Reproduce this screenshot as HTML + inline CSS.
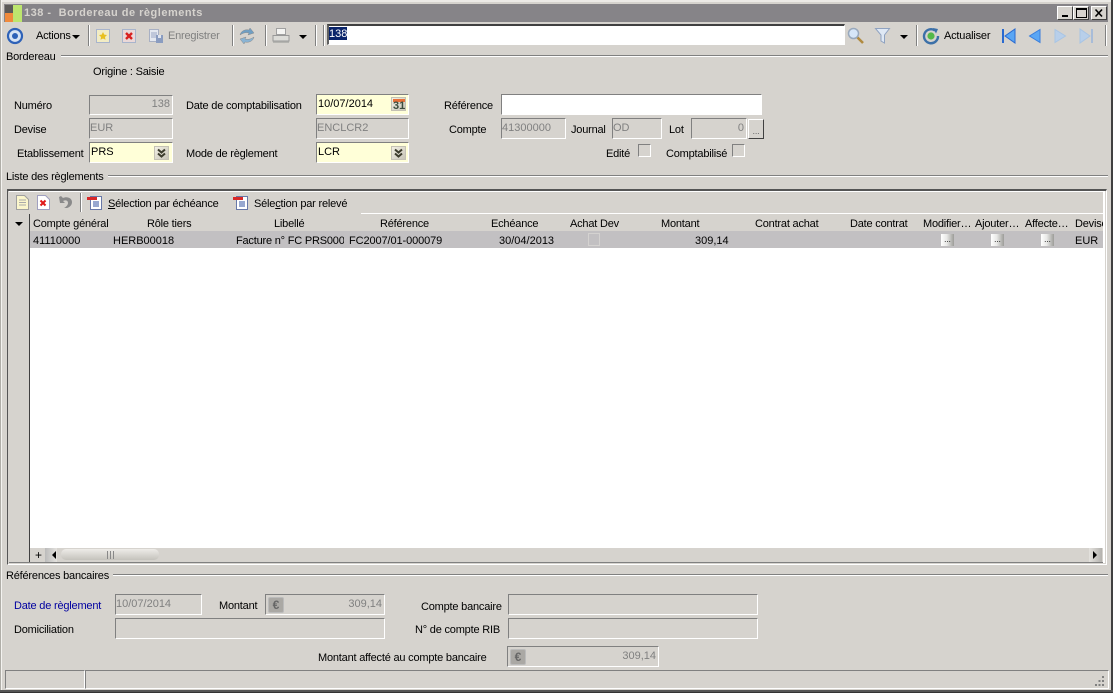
<!DOCTYPE html>
<html lang="fr"><head><meta charset="utf-8"><title>Bordereau de règlements</title>
<style>
html,body{margin:0;padding:0;width:1113px;height:693px;overflow:hidden;background:#d6d3ce}
body{position:relative;font-family:"Liberation Sans",sans-serif;font-size:11px;letter-spacing:-.2px;color:#000}
.b{position:absolute;box-sizing:border-box}
.t{position:absolute;white-space:nowrap;line-height:14px;height:14px;margin-top:1px}
.n{letter-spacing:0}
.g{color:#808080}
.f{position:absolute;box-sizing:border-box;border:1px solid;border-color:#808080 #fff #fff #808080;background:#d6d3ce}
.y{background:#ffffd8}
.w{background:#fff}
.sep{position:absolute;width:1px;background:#808080;border-right:1px solid #fff}
.gr{position:absolute;height:1px;background:#808080;border-bottom:1px solid #fff}
svg{position:absolute;overflow:visible}
.dd{position:absolute;width:15px;height:14px;background:linear-gradient(135deg,#f2f0e4,#c8c5b8);border:1px solid #c4c1b4;box-sizing:border-box}
.gb{position:absolute;width:13px;height:12px;background:linear-gradient(90deg,#fff,#e8e8e6 45%,#9c9c98);font-size:8px;line-height:12px;text-align:center;letter-spacing:0}
.wb{position:absolute;top:6px;width:16px;height:14px;box-sizing:border-box;background:#d6d3ce;border:1px solid;border-color:#fff #404040 #404040 #fff}
.eu{position:absolute;width:16px;height:16px;background:#aaa8a4;border:1px solid #bbb;box-sizing:border-box;border-radius:2px;color:#666;font-weight:bold;font-size:12px;line-height:14px;text-align:center;letter-spacing:0}
</style></head><body>
<!-- window frame -->
<div class="b" style="left:0;top:0;width:1113px;height:2px;background:#eceae6"></div>
<div class="b" style="left:0;top:0;width:1px;height:693px;background:#b0aea8"></div>
<div class="b" style="left:1px;top:0;width:1px;height:693px;background:#f4f3f0"></div>
<div class="b" style="left:1111px;top:0;width:2px;height:693px;background:#404040"></div>
<div class="b" style="left:0;top:690px;width:1113px;height:3px;background:#555"></div>
<div class="b" style="left:0;top:692px;width:1113px;height:1px;background:#333"></div>
<!-- title bar -->
<div class="b" style="left:4px;top:4px;width:1104px;height:18px;background:#868488"></div>
<div class="b" style="left:5px;top:5px;width:8px;height:8px;background:#5c5a58"></div>
<div class="b" style="left:5px;top:13px;width:8px;height:9px;background:#f08a3c"></div>
<div class="b" style="left:13px;top:5px;width:9px;height:17px;background:#bde66e"></div>
<div class="t" style="left:24px;top:5px;font-weight:bold;color:#d6d3ce;font-size:11px;letter-spacing:.5px">138 -&nbsp; Bordereau de règlements</div>
<div class="wb" style="left:1057px"><div class="b" style="left:4px;top:8px;width:6px;height:2px;background:#000"></div></div>
<div class="wb" style="left:1073px"><div class="b" style="left:2px;top:1px;width:11px;height:10px;border:1px solid #000;border-top-width:2px"></div></div>
<div class="wb" style="left:1091px"><svg width="14" height="12" style="left:0;top:0"><path d="M3.500 2.500l6.500 7M10 2.500l-6.500 7" stroke="#000" stroke-width="1.600" fill="none"/></svg></div>

<!-- main toolbar -->
<svg width="18" height="18" style="left:6px;top:27px"><circle cx="9" cy="9" r="7" fill="#d8e4f4" stroke="#2e62b8" stroke-width="2.200"/><circle cx="9" cy="9" r="3" fill="#2e62b8"/></svg>
<div class="t" style="left:36px;top:28px">Actions</div>
<svg width="8" height="4" style="left:72px;top:35px"><path d="M0 0h8L4 4z"/></svg>
<div class="sep" style="left:88px;top:25px;height:21px"></div>
<svg width="16" height="16" style="left:95px;top:28px"><path d="M1.500 1.500h13v13h-13z" fill="#f2ecc4" stroke="#a8b4cc"/><path d="M8 4l1.300 2.600 2.700.4-2 2 .5 2.800L8 10.500 5.500 11.800 6 9 4 7l2.700-.4z" fill="#e8c020"/></svg>
<svg width="16" height="16" style="left:121px;top:28px"><path d="M1.500 1.500h13v13h-13z" fill="#ead8d8" stroke="#a8b4cc"/><path d="M5 5l6 6M11 5l-6 6" stroke="#d82020" stroke-width="2.400"/></svg>
<svg width="17" height="16" style="left:148px;top:28px"><path d="M1.500 1.500h9v12h-9z" fill="#e4e8f0" stroke="#a8b0c4"/><path d="M3 5h6M3 7h6M3 9h6" stroke="#9aa6c4"/><path d="M8 7h7v8H8z" fill="#8a9cc0"/><path d="M10 7h3v3h-3z" fill="#dfe4ee"/></svg>
<div class="t g" style="left:168px;top:28px">Enregistrer</div>
<div class="sep" style="left:232px;top:25px;height:21px"></div>
<svg width="18" height="18" style="left:238px;top:27px"><path d="M2 8c1-4 5-6 9-5l1-2 4 5-6 2 1-2c-3-1-6 0-9 2z" fill="#6f9fc4" stroke="#8a8a8a" stroke-width=".5"/><path d="M16 10c-1 4-5 6-9 5l-1 2-4-5 6-2-1 2c3 1 6 0 9-2z" fill="#8ab4d4" stroke="#8a8a8a" stroke-width=".5"/></svg>
<div class="sep" style="left:265px;top:25px;height:21px"></div>
<svg width="18" height="18" style="left:272px;top:27px"><path d="M4.500 1.500h9v6h-9z" fill="#f4f4f2" stroke="#a0a0a0"/><path d="M1 8.500h16v5.500H1z" fill="#dcdcd8" stroke="#989898"/><path d="M1 14.500h16v1.500H1z" fill="#b4b4b0"/></svg>
<svg width="8" height="4" style="left:299px;top:35px"><path d="M0 0h8L4 4z"/></svg>
<div class="sep" style="left:315px;top:25px;height:21px"></div>
<div class="sep" style="left:323px;top:25px;height:21px"></div>
<div class="f w" style="left:327px;top:24px;width:518px;height:21px;border-top:2px solid #404040;border-left:2px solid #606060"></div>
<div class="b" style="left:329px;top:27px;width:18px;height:13px;background:#0a246a"></div>
<div class="t n" style="left:329px;top:26px;color:#fff">138</div>
<svg width="18" height="18" style="left:847px;top:27px"><path d="M10 10l6 6" stroke="#b08a40" stroke-width="2.600"/><circle cx="6.500" cy="6.500" r="5" fill="#d6e6f8" stroke="#98a8bc" stroke-width="1.500"/></svg>
<svg width="16" height="18" style="left:875px;top:27px"><path d="M.5 1.500h14L9.500 8v8L6 14V8z" fill="#dfe8f4" stroke="#8fa2c0"/></svg>
<svg width="8" height="4" style="left:900px;top:35px"><path d="M0 0h8L4 4z"/></svg>
<div class="sep" style="left:916px;top:25px;height:21px"></div>
<svg width="18" height="18" style="left:922px;top:27px"><path d="M13 3.500A7 7 0 1 0 16 9" fill="none" stroke="#3c70a8" stroke-width="2.400"/><path d="M11 1l5 1-2 4.500z" fill="#3c70a8"/><circle cx="9" cy="9" r="3.600" fill="#54b848"/></svg>
<div class="t" style="left:944px;top:28px">Actualiser</div>
<svg width="15" height="16" style="left:1001px;top:28px"><path d="M1 1h2v14H1z" fill="#2a6ad0"/><path d="M14 1v14L4 8z" fill="#5aa6f4" stroke="#2a6ad0"/></svg>
<svg width="13" height="16" style="left:1028px;top:28px"><path d="M12 1.500v13L1.500 8z" fill="#5aa6f4" stroke="#3a7edc"/></svg>
<svg width="13" height="16" style="left:1054px;top:28px"><path d="M1 1.500v13L11.500 8z" fill="#b8cfea" stroke="#a8c4e4"/></svg>
<svg width="15" height="16" style="left:1079px;top:28px"><path d="M12 1h2v14h-2z" fill="#a8bcd8"/><path d="M1 1v14L11 8z" fill="#b8cfea" stroke="#a8c4e4"/></svg>
<div class="sep" style="left:1105px;top:25px;height:21px"></div>

<!-- Bordereau -->
<div class="gr" style="left:61px;top:55px;width:1047px"></div>
<div class="t" style="left:6px;top:49px">Bordereau</div>
<div class="t" style="left:93px;top:64px">Origine : Saisie</div>
<div class="t" style="left:14px;top:98px">Numéro</div>
<div class="f" style="left:89px;top:95px;width:84px;height:20px"></div>
<div class="t g n" style="left:100px;width:70px;text-align:right;top:96px">138</div>
<div class="t" style="left:14px;top:122px">Devise</div>
<div class="f" style="left:89px;top:118px;width:84px;height:21px"></div>
<div class="t g n" style="left:90px;top:120px">EUR</div>
<div class="t" style="left:17px;top:146px">Etablissement</div>
<div class="f y" style="left:89px;top:142px;width:84px;height:21px"></div>
<div class="t n" style="left:91px;top:144px">PRS</div>
<div class="dd" style="left:154px;top:146px"><svg width="13" height="12" style="left:0;top:0"><path d="M3 2.500l3.500 3 3.500-3M3 6.500l3.500 3 3.500-3" fill="none" stroke="#3c3c2c" stroke-width="2"/></svg></div>
<div class="t" style="left:186px;top:98px">Date de comptabilisation</div>
<div class="f y" style="left:316px;top:94px;width:93px;height:21px"></div>
<div class="t n" style="left:318px;top:96px">10/07/2014</div>
<div class="dd" style="left:391px;top:97px"><div class="b" style="left:1px;top:1px;width:12px;height:3px;background:#e87038"></div><div class="t n" style="left:1px;top:0;font-weight:bold;font-size:11px;color:#3c4c3c">31</div></div>
<div class="f" style="left:316px;top:118px;width:93px;height:21px"></div>
<div class="t g n" style="left:317px;top:120px">ENCLCR2</div>
<div class="t" style="left:186px;top:146px">Mode de règlement</div>
<div class="f y" style="left:316px;top:142px;width:93px;height:21px"></div>
<div class="t n" style="left:318px;top:144px">LCR</div>
<div class="dd" style="left:391px;top:146px"><svg width="13" height="12" style="left:0;top:0"><path d="M3 2.500l3.500 3 3.500-3M3 6.500l3.500 3 3.500-3" fill="none" stroke="#3c3c2c" stroke-width="2"/></svg></div>
<div class="t" style="left:444px;top:98px">Référence</div>
<div class="f w" style="left:501px;top:94px;width:261px;height:21px"></div>
<div class="t" style="left:449px;top:122px">Compte</div>
<div class="f" style="left:501px;top:118px;width:65px;height:21px"></div>
<div class="t g n" style="left:502px;top:120px">41300000</div>
<div class="t" style="left:571px;top:122px">Journal</div>
<div class="f" style="left:612px;top:118px;width:50px;height:21px"></div>
<div class="t g n" style="left:613px;top:120px">OD</div>
<div class="t" style="left:669px;top:122px">Lot</div>
<div class="f" style="left:691px;top:118px;width:56px;height:21px"></div>
<div class="t g n" style="left:700px;width:44px;text-align:right;top:120px">0</div>
<div class="b" style="left:748px;top:119px;width:16px;height:20px;border:1px solid;border-color:#fff #404040 #404040 #fff;background:#d6d3ce;font-size:9px;text-align:center;line-height:22px;color:#666">...</div>
<div class="t" style="left:606px;top:146px">Edité</div>
<div class="f" style="left:638px;top:144px;width:13px;height:13px"></div>
<div class="t" style="left:666px;top:146px">Comptabilisé</div>
<div class="f" style="left:732px;top:144px;width:13px;height:13px"></div>

<!-- Liste -->
<div class="gr" style="left:108px;top:175px;width:1000px"></div>
<div class="t" style="left:6px;top:169px">Liste des règlements</div>
<div class="b" style="left:7px;top:189px;width:1100px;height:376px;border:1px solid;border-color:#555 #fff #fff #555;border-top-width:2px"></div>
<div class="b" style="left:9px;top:191px;width:1096px;height:372px;background:#fff"></div>
<div class="b" style="left:9px;top:192px;width:1094px;height:21px;background:#d6d3ce"></div>
<div class="b" style="left:361px;top:213px;width:742px;height:1px;background:#fff"></div>
<div class="b" style="left:9px;top:213px;width:352px;height:1px;background:#d6d3ce"></div>
<svg width="13" height="15" style="left:16px;top:195px"><path d="M.5.500h8l4 4v10H.500z" fill="#fbf6cc" stroke="#a0a0a0"/><path d="M3 5h7M3 7.500h7M3 10h7" stroke="#aaa"/></svg>
<svg width="13" height="15" style="left:37px;top:195px"><path d="M.5.500h8l4 4v10H.500z" fill="#fff" stroke="#a0a0c0"/><path d="M3.500 5.500l5 5M8.500 5.500l-5 5" stroke="#e01818" stroke-width="2"/></svg>
<svg width="15" height="15" style="left:58px;top:195px"><path d="M1 2l1 6h5L5 6c2-1 5-1 5 2 0 2-2 4-4 5h3c3-1 5-3 5-6 0-4-5-6-9-4L3 1z" fill="#8a8a8a"/></svg>
<div class="sep" style="left:80px;top:193px;height:19px"></div>
<svg width="16" height="15" style="left:87px;top:195px"><path d="M3.500 1.500h11v13h-11z" fill="#fff" stroke="#6878a8"/><path d="M6 7h6M6 9h6M6 11h6" stroke="#3050a0"/><path d="M0 2h10v3H0z" fill="#d82828"/></svg>
<div class="t" style="left:108px;top:196px"><u>S</u>élection par échéance</div>
<svg width="16" height="15" style="left:233px;top:195px"><path d="M3.500 1.500h11v13h-11z" fill="#fff" stroke="#6878a8"/><path d="M6 7h6M6 9h6M6 11h6" stroke="#3050a0"/><path d="M0 2h10v3H0z" fill="#d82828"/></svg>
<div class="t" style="left:254px;top:196px">Séle<u>c</u>tion par relevé</div>
<!-- grid -->
<div class="b" style="left:9px;top:214px;width:1094px;height:17px;background:#d6d3ce"></div>
<div class="b" style="left:30px;top:231px;width:1073px;height:17px;background:#c2c0c2"></div>
<div class="b" style="left:9px;top:214px;width:20px;height:348px;background:#d6d3ce"></div>
<div class="b" style="left:29px;top:214px;width:1px;height:348px;background:#404040"></div>
<svg width="8" height="4" style="left:15px;top:222px"><path d="M0 0h8L4 4z"/></svg>
<div class="t" style="left:33px;top:216px">Compte général</div>
<div class="t" style="left:147px;top:216px">Rôle tiers</div>
<div class="t" style="left:274px;top:216px">Libellé</div>
<div class="t" style="left:380px;top:216px">Référence</div>
<div class="t" style="left:491px;top:216px">Echéance</div>
<div class="t" style="left:570px;top:216px">Achat Dev</div>
<div class="t" style="left:661px;top:216px">Montant</div>
<div class="t" style="left:755px;top:216px">Contrat achat</div>
<div class="t" style="left:850px;top:216px">Date contrat</div>
<div class="t" style="left:923px;top:216px">Modifier…</div>
<div class="t" style="left:975px;top:216px">Ajouter…</div>
<div class="t" style="left:1025px;top:216px">Affecte…</div>
<div class="t" style="left:1075px;top:216px;width:28px;overflow:hidden">Devise</div>
<div class="t n" style="left:33px;top:233px">41110000</div>
<div class="t n" style="left:113px;top:233px">HERB00018</div>
<div class="t" style="left:236px;top:233px;width:108px;overflow:hidden">Facture n° FC PRS00001</div>
<div class="t n" style="left:349px;top:233px;letter-spacing:-.1px">FC2007/01-000079</div>
<div class="t n" style="left:499px;top:233px">30/04/2013</div>
<div class="b" style="left:588px;top:233px;width:12px;height:13px;border:1px solid #d4d2d0"></div>
<div class="t n" style="left:695px;top:233px">309,14</div>
<div class="gb" style="left:941px;top:234px">...</div>
<div class="gb" style="left:991px;top:234px">...</div>
<div class="gb" style="left:1041px;top:234px">...</div>
<div class="t n" style="left:1075px;top:233px">EUR</div>
<!-- scrollbar -->
<div class="b" style="left:30px;top:548px;width:1073px;height:14px;background:#d6d3ce"></div>
<div class="b" style="left:9px;top:562px;width:1094px;height:1px;background:#808080"></div>
<div class="t" style="left:35px;top:547px;font-size:12px">+</div>
<div class="b" style="left:45px;top:548px;width:12px;height:14px;background:linear-gradient(90deg,#bbb,#e4e2de)"></div>
<svg width="4" height="8" style="left:52px;top:551px"><path d="M4 0v8L0 4z"/></svg>
<div class="b" style="left:61px;top:549px;width:98px;height:11px;border-radius:5px;background:linear-gradient(180deg,#eeece8,#c4c2bc)"></div>
<svg width="8" height="8" style="left:107px;top:551px"><path d="M.5 0v8M3.500 0v8M6.500 0v8" stroke="#888"/></svg>
<div class="b" style="left:1089px;top:548px;width:13px;height:14px;background:linear-gradient(90deg,#e4e2de,#b4b2ae)"></div>
<svg width="4" height="8" style="left:1093px;top:551px"><path d="M0 0v8L4 4z"/></svg>

<!-- References -->
<div class="gr" style="left:113px;top:574px;width:995px"></div>
<div class="t" style="left:6px;top:568px">Références bancaires</div>
<div class="t" style="left:14px;top:598px;color:#0000a0">Date de règlement</div>
<div class="f" style="left:115px;top:594px;width:87px;height:21px"></div>
<div class="t g n" style="left:116px;top:596px">10/07/2014</div>
<div class="t" style="left:219px;top:598px">Montant</div>
<div class="f" style="left:265px;top:594px;width:120px;height:21px"></div>
<div class="eu" style="left:268px;top:597px">€</div>
<div class="t g n" style="left:320px;width:62px;text-align:right;top:596px">309,14</div>
<div class="t" style="left:14px;top:622px">Domiciliation</div>
<div class="f" style="left:115px;top:618px;width:270px;height:21px"></div>
<div class="t" style="left:421px;top:599px">Compte bancaire</div>
<div class="f" style="left:508px;top:594px;width:250px;height:21px"></div>
<div class="t" style="left:415px;top:622px">N° de compte RIB</div>
<div class="f" style="left:508px;top:618px;width:250px;height:21px"></div>
<div class="t" style="left:318px;top:650px">Montant affecté au compte bancaire</div>
<div class="f" style="left:507px;top:646px;width:152px;height:21px"></div>
<div class="eu" style="left:510px;top:649px">€</div>
<div class="t g n" style="left:590px;width:66px;text-align:right;top:648px">309,14</div>

<!-- status bar -->
<div class="f" style="left:5px;top:670px;width:80px;height:19px"></div>
<div class="f" style="left:85px;top:670px;width:1024px;height:19px"></div>
<svg width="12" height="12" style="left:1094px;top:675px"><g fill="#808080"><path d="M8 1h2v2H8zM4.500 5h2v2h-2zM8 5h2v2H8zM1 9h2v2H1zM4.500 9h2v2h-2zM8 9h2v2H8z"/></g></svg>
</body></html>
